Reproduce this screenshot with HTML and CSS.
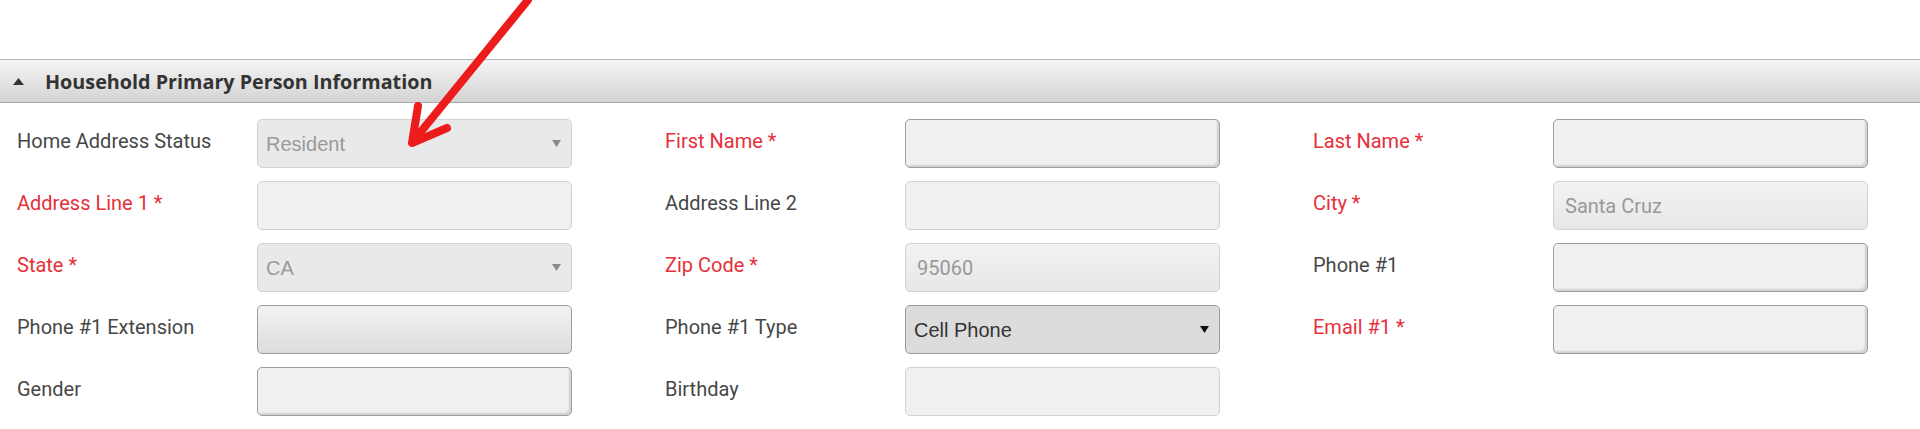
FILE: index.html
```html
<!DOCTYPE html>
<html lang="en">

<head>
    <meta charset="UTF-8">
    <meta name="viewport" content="width=device-width, initial-scale=1.0">
    <title>Household Primary Person Information</title>
    <link rel="stylesheet" href="styles.css">
</head>

<body>

    <!-- red call-out arrow drawn over the form -->
    <svg class="callout" width="1920" height="429" viewBox="0 0 1920 429">
        <line x1="528" y1="0" x2="415" y2="139" />
        <polyline points="418,106 412,143 447,128" />
    </svg>

    <div class="panel">
        <div class="panel-header">
            <svg class="toggle" width="11" height="7" viewBox="0 0 11 7"><path d="M0 7 L5.5 0 L11 7 Z" /></svg>
            <span>Household Primary Person Information</span>
        </div>

        <form class="panel-body">
            <div class="form-group">
                <label for="addr-status">Home Address Status</label>
                <div class="select-wrap">
                    <select id="addr-status" class="locked"><option>Resident</option></select>
                    <svg class="caret" width="9" height="7" viewBox="0 0 9 7"><path d="M0 0 H9 L4.5 7 Z" /></svg>
                </div>
            </div>
            <div class="form-group">
                <label for="first-name" class="required">First Name *</label>
                <input type="text" id="first-name" class="outlined">
            </div>
            <div class="form-group">
                <label for="last-name" class="required">Last Name *</label>
                <input type="text" id="last-name" class="outlined">
            </div>

            <div class="form-group">
                <label for="address1" class="required">Address Line 1 *</label>
                <input type="text" id="address1">
            </div>
            <div class="form-group">
                <label for="address2">Address Line 2</label>
                <input type="text" id="address2">
            </div>
            <div class="form-group">
                <label for="city" class="required">City *</label>
                <input type="text" id="city" class="readonly" value="Santa Cruz">
            </div>

            <div class="form-group">
                <label for="state" class="required">State *</label>
                <div class="select-wrap">
                    <select id="state" class="locked"><option>CA</option></select>
                    <svg class="caret" width="9" height="7" viewBox="0 0 9 7"><path d="M0 0 H9 L4.5 7 Z" /></svg>
                </div>
            </div>
            <div class="form-group">
                <label for="zip" class="required">Zip Code *</label>
                <input type="text" id="zip" class="readonly" value="95060">
            </div>
            <div class="form-group">
                <label for="phone1">Phone #1</label>
                <input type="text" id="phone1" class="outlined">
            </div>

            <div class="form-group">
                <label for="phone1-ext">Phone #1 Extension</label>
                <input type="text" id="phone1-ext" class="outlined shaded">
            </div>
            <div class="form-group">
                <label for="phone1-type">Phone #1 Type</label>
                <div class="select-wrap">
                    <select id="phone1-type" class="active"><option>Cell Phone</option></select>
                    <svg class="caret dark" width="9" height="7" viewBox="0 0 9 7"><path d="M0 0 H9 L4.5 7 Z" /></svg>
                </div>
            </div>
            <div class="form-group">
                <label for="email1" class="required">Email #1 *</label>
                <input type="text" id="email1" class="outlined">
            </div>

            <div class="form-group">
                <label for="gender">Gender</label>
                <input type="text" id="gender" class="outlined">
            </div>
            <div class="form-group">
                <label for="birthday">Birthday</label>
                <input type="text" id="birthday">
            </div>
        </form>
    </div>

</body>

</html>
```

FILE: styles.css
```css
body {
    font-family: Roboto, "Liberation Sans", sans-serif;
    margin: 0;
    padding: 0;
    background: #fff;
}

.callout {
    position: absolute;
    top: 0;
    left: 0;
    pointer-events: none;
    z-index: 10;
}

.callout line,
.callout polyline {
    fill: none;
    stroke: #ec1c1c;
    stroke-width: 8;
    stroke-linecap: round;
    stroke-linejoin: round;
}

.panel {
    margin-top: 59px;
}

.panel-header {
    display: flex;
    align-items: center;
    height: 42px;
    border-top: 1px solid #b7b7b7;
    border-bottom: 1px solid #a9a9a9;
    background: linear-gradient(#f4f4f4, #d4d4d4);
    font-family: "Open Sans", sans-serif;
    font-weight: 700;
    font-size: 19.75px;
    color: #333;
}

.toggle {
    margin: 0 21px 0 13px;
    fill: #333;
}

.panel-body {
    display: grid;
    grid-template-columns: repeat(3, 555px);
    column-gap: 93px;
    row-gap: 13px;
    padding: 16px 0 0 17px;
}

.form-group {
    display: flex;
}

label {
    flex: none;
    width: 240px;
    padding-top: 10px;
    font-size: 20px;
    line-height: 24px;
    color: #474747;
}

label.required {
    color: #e6303a;
}

input[type="text"],
select {
    box-sizing: border-box;
    width: 315px;
    height: 49px;
    margin: 0;
    padding: 0 10px;
    border: 1px solid #d2d2d2;
    border-radius: 5px;
    background: #f0f0f0;
    font-family: Roboto, sans-serif;
    font-size: 20px;
    color: #999;
    outline: none;
}

input.readonly {
    background: linear-gradient(#f3f3f3, #e7e7e7);
    padding-left: 11px;
}

input.outlined {
    border-color: #9d9d9d;
    box-shadow: inset -3px -3px 2px -1px rgba(0, 0, 0, 0.13);
}

input.shaded {
    background: linear-gradient(#f3f3f3, #dcdcdc);
    box-shadow: none;
}

.select-wrap {
    position: relative;
    width: 315px;
}

select {
    -webkit-appearance: none;
    appearance: none;
    padding-left: 8px;
    font-family: "Liberation Sans", Arial, sans-serif;
}

select.locked {
    background: #e9e9e9;
    color: #9a9a9a;
}

select.active {
    background: #dcdcdc;
    border-color: #9a9a9a;
    color: #333;
}

.caret {
    position: absolute;
    right: 11px;
    top: 21px;
    fill: #8a8a8a;
    pointer-events: none;
}

.caret.dark {
    fill: #111;
}
```
